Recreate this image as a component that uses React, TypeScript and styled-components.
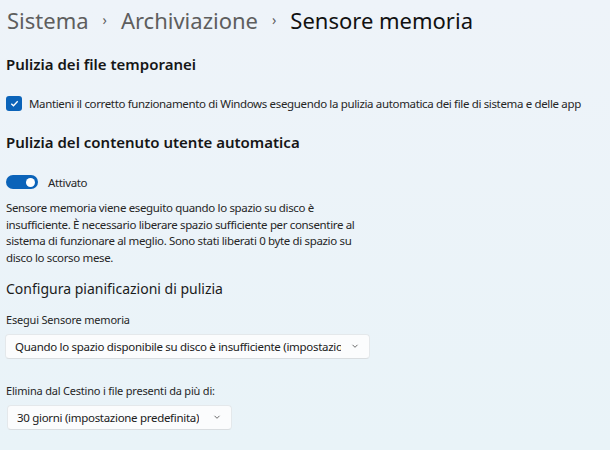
import styled, { createGlobalStyle } from "styled-components";

const GlobalStyle = createGlobalStyle`
  html, body {
    margin: 0;
    padding: 0;
    background: #edf3f8;
    font-family: "Noto Sans", "Open Sans", sans-serif;
    color: #1b1b1b;
  }
`;

const Page = styled.div`
  width: 610px;
  height: 450px;
  overflow: hidden;
  box-sizing: border-box;
  padding: 5px 6px 0 6px;
  background: linear-gradient(180deg, #eef3f9 0%, #e9f3f8 100%);
`;

const Breadcrumb = styled.div`
  display: flex;
  align-items: center;
  gap: 14px;
  padding-left: 1px;
  font-size: 22px;
  line-height: 30px;
  height: 30px;
`;

const Crumb = styled.span<{ $current?: boolean }>`
  color: ${(p) => (p.$current ? "#111" : "#5e5e5e")};
`;

const Sep = styled.span`
  font-size: 14px;
  color: #5e5e5e;
`;

const SectionTitle = styled.h2<{ $top: number }>`
  margin: ${(p) => p.$top}px 0 0 0;
  font-size: 15px;
  font-weight: 600;
  line-height: 22px;
  color: #161616;
`;

const BodyText = styled.span`
  font-size: 11.5px;
  letter-spacing: -0.35px;
  color: #262626;
`;

const CheckRow = styled.label`
  display: flex;
  align-items: center;
  gap: 7px;
  height: 16px;
  margin-top: 20px;
`;

const Box = styled.span`
  width: 16px;
  height: 15px;
  border-radius: 3px;
  background: #0b63b9;
  display: flex;
  align-items: center;
  justify-content: center;
`;

const ToggleRow = styled.div`
  display: flex;
  align-items: center;
  gap: 10px;
  height: 14px;
  margin-top: 22px;
`;

const Track = styled.span`
  width: 32px;
  height: 14px;
  border-radius: 7px;
  background: #0b63b9;
  display: flex;
  align-items: center;
  justify-content: flex-end;
  padding-right: 3px;
  box-sizing: border-box;
`;

const Knob = styled.span`
  width: 9px;
  height: 9px;
  border-radius: 50%;
  background: #fff;
`;

const Paragraph = styled.p`
  margin: 11px 0 0 0;
  width: 370px;
  font-size: 11.5px;
  letter-spacing: -0.35px;
  line-height: 16.7px;
  color: #262626;
  white-space: nowrap;
`;

const SubTitle = styled.h3`
  margin: 11px 0 0 0;
  font-size: 14px;
  font-weight: 400;
  line-height: 22px;
  color: #1b1b1b;
`;

const FieldLabel = styled.div<{ $top: number }>`
  margin-top: ${(p) => p.$top}px;
  font-size: 11px;
  letter-spacing: -0.2px;
  line-height: 16px;
  color: #262626;
`;

const Select = styled.div<{ $width: number; $left: number }>`
  margin: 6px 0 0 ${(p) => p.$left}px;
  width: ${(p) => p.$width}px;
  height: 25px;
  box-sizing: border-box;
  padding: 0 9px 0 9px;
  display: flex;
  align-items: center;
  justify-content: space-between;
  background: #fbfcfd;
  border: 1px solid #e4e8eb;
  border-bottom-color: #d9dde0;
  border-radius: 4px;
  font-size: 11.5px;
  letter-spacing: -0.3px;
  color: #202020;
  white-space: nowrap;
`;

const SelectText = styled.span<{ $clip?: boolean }>`
  overflow: hidden;
  ${(p) => (p.$clip ? "flex: 1;" : "")}
`;

const Chevron = () => (
  <svg width="10" height="10" viewBox="0 0 10 10" style={{ flex: "none", marginLeft: 9 }}>
    <path d="M2.5 3.8 L5 6.3 L7.5 3.8" fill="none" stroke="#6a6a6a" strokeWidth="1" />
  </svg>
);

export default function App() {
  return (
    <Page>
      <GlobalStyle />
      <Breadcrumb>
        <Crumb>Sistema</Crumb>
        <Sep>›</Sep>
        <Crumb>Archiviazione</Crumb>
        <Sep>›</Sep>
        <Crumb $current>Sensore memoria</Crumb>
      </Breadcrumb>

      <SectionTitle $top={18}>Pulizia dei file temporanei</SectionTitle>
      <CheckRow>
        <Box>
          <svg width="11" height="11" viewBox="0 0 11 11">
            <path d="M2.3 5.7 L4.5 7.8 L8.7 3.3" fill="none" stroke="#fff" strokeWidth="1.3" />
          </svg>
        </Box>
        <BodyText>
          Mantieni il corretto funzionamento di Windows eseguendo la pulizia automatica dei file di sistema e delle app
        </BodyText>
      </CheckRow>

      <SectionTitle $top={20}>Pulizia del contenuto utente automatica</SectionTitle>
      <ToggleRow>
        <Track>
          <Knob />
        </Track>
        <BodyText>Attivato</BodyText>
      </ToggleRow>
      <Paragraph>
        Sensore memoria viene eseguito quando lo spazio su disco è
        <br />
        insufficiente. È necessario liberare spazio sufficiente per consentire al
        <br />
        sistema di funzionare al meglio. Sono stati liberati 0 byte di spazio su
        <br />
        disco lo scorso mese.
      </Paragraph>

      <SubTitle>Configura pianificazioni di pulizia</SubTitle>
      <FieldLabel $top={12}>Esegui Sensore memoria</FieldLabel>
      <Select $width={365} $left={-1}>
        <SelectText $clip>Quando lo spazio disponibile su disco è insufficiente (impostazione predefinita)</SelectText>
        <Chevron />
      </Select>

      <FieldLabel $top={24}>Elimina dal Cestino i file presenti da più di:</FieldLabel>
      <Select $width={225} $left={1}>
        <SelectText>30 giorni (impostazione predefinita)</SelectText>
        <Chevron />
      </Select>
    </Page>
  );
}
